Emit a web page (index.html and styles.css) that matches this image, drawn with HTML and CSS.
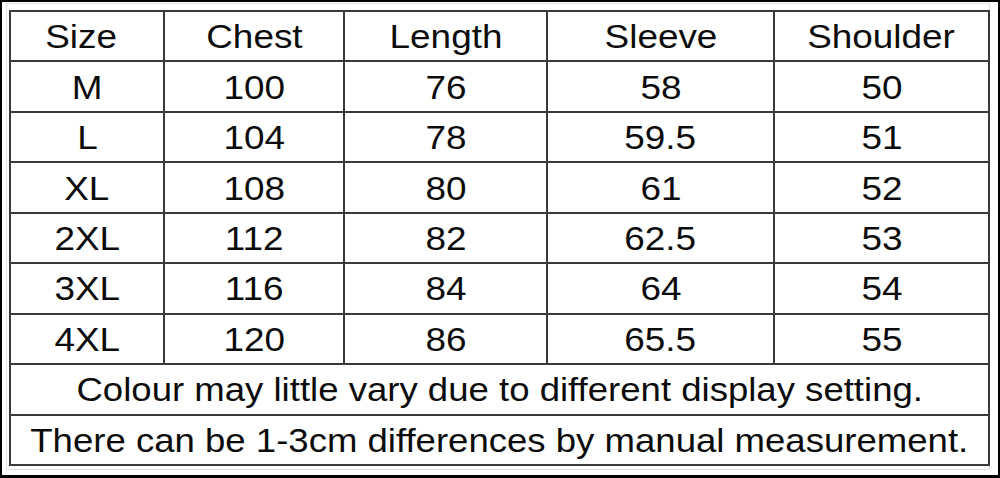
FILE: index.html
```html
<!DOCTYPE html>
<html>
<head>
<meta charset="utf-8">
<link rel="stylesheet" href="styles.css">
</head>
<body>
<div class="frame">
  <div class="sheet">
    <table class="chart">
      <colgroup>
        <col class="c1"><col class="c2"><col class="c3"><col class="c4"><col class="c5">
      </colgroup>
      <tr><td class="size"><span>Size</span></td><td><span>Chest</span></td><td><span>Length</span></td><td><span>Sleeve</span></td><td><span>Shoulder</span></td></tr>
      <tr><td><span>M</span></td><td><span>100</span></td><td><span>76</span></td><td><span>58</span></td><td><span>50</span></td></tr>
      <tr><td><span>L</span></td><td><span>104</span></td><td><span>78</span></td><td><span>59.5</span></td><td><span>51</span></td></tr>
      <tr><td><span>XL</span></td><td><span>108</span></td><td><span>80</span></td><td><span>61</span></td><td><span>52</span></td></tr>
      <tr><td><span>2XL</span></td><td><span>112</span></td><td><span>82</span></td><td><span>62.5</span></td><td><span>53</span></td></tr>
      <tr><td><span>3XL</span></td><td><span>116</span></td><td><span>84</span></td><td><span>64</span></td><td><span>54</span></td></tr>
      <tr><td><span>4XL</span></td><td><span>120</span></td><td><span>86</span></td><td><span>65.5</span></td><td><span>55</span></td></tr>
      <tr><td colspan="5" class="note"><span>Colour may little vary due to different display setting.</span></td></tr>
      <tr><td colspan="5" class="note"><span>There can be 1-3cm differences by manual measurement.</span></td></tr>
    </table>
  </div>
</div>
</body>
</html>
```
FILE: styles.css
```css
html, body {
  margin: 0;
  padding: 0;
  background: #fff;
}
.frame {
  width: 1000px;
  height: 478px;
  box-sizing: border-box;
  border-style: solid;
  border-color: #000;
  border-width: 2px 2px 3px 2px;
  padding: 1px 0 0 4px;
  background: #fff;
}
.sheet {
  width: 984px;
  box-sizing: border-box;
  border: 1px solid #e2e2e2;
  padding: 6px 1px 3px 2px;
}
.chart {
  width: 979px;
  height: 456px;
  table-layout: fixed;
  border-collapse: collapse;
  border: 2px solid #111;
  font-family: "Liberation Sans", Arial, sans-serif;
  font-size: 34px;
  color: #0c0c0c;
}
.c1 { width: 154px; }
.c2 { width: 180px; }
.c3 { width: 203px; }
.c4 { width: 227px; }
.c5 { width: 215px; }
.chart td {
  border: 2px solid #3a3a3a;
  text-align: center;
  vertical-align: middle;
  padding: 0;
  line-height: 1;
  white-space: nowrap;
}
.chart td span {
  display: inline-block;
  transform: scaleX(1.085);
}
.chart td.note span {
  transform: scaleX(1.075);
}
.chart td.size {
  padding-right: 12px;
}
```
